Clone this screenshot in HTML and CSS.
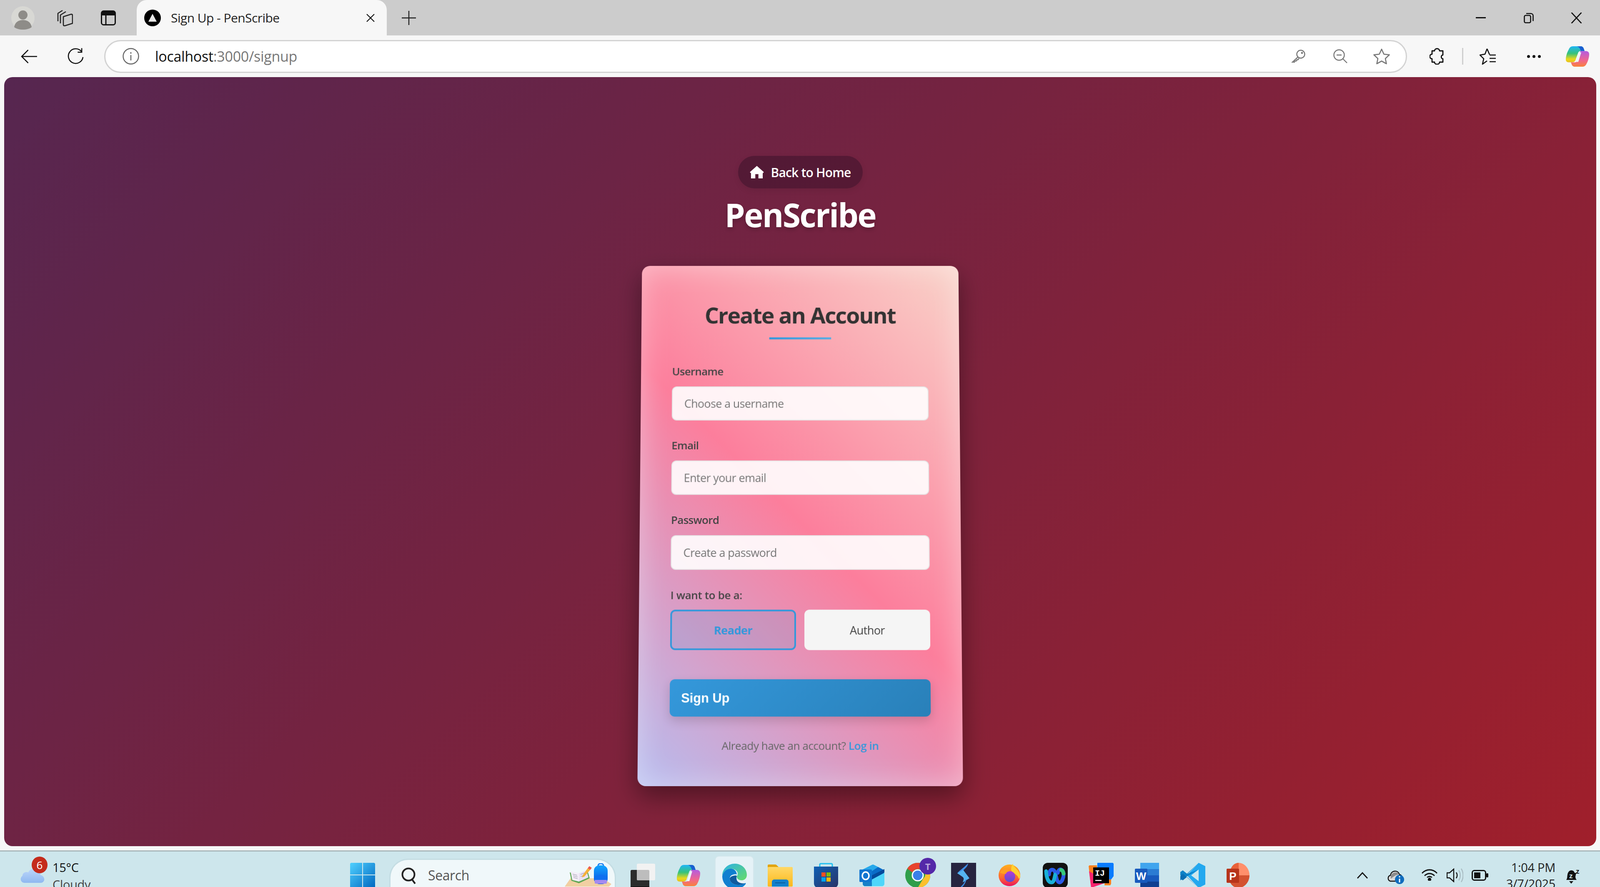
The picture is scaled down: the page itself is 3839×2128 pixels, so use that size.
FILE: index.html

```html
<!DOCTYPE html>
<html lang="en">
<head>
    <meta charset="UTF-8">
    <title>Sign Up - PenScribe</title>
    <link rel="stylesheet" href="styles.css">
</head>
<body>
    <svg width="0" height="0" class="defs">
        <defs>
            <linearGradient id="copilotA" x1="0" y1="0" x2="0" y2="1">
                <stop offset="0" stop-color="#1fb6f6"/><stop offset=".45" stop-color="#37c27a"/><stop offset=".8" stop-color="#e8d81c"/><stop offset="1" stop-color="#e8c020"/>
            </linearGradient>
            <linearGradient id="copilotB" x1="0" y1="0" x2="0" y2="1">
                <stop offset="0" stop-color="#b45ce0"/><stop offset=".6" stop-color="#f0668e"/><stop offset="1" stop-color="#f9823a"/>
            </linearGradient>
            <linearGradient id="winBlue" x1="0" y1="0" x2="1" y2="1">
                <stop offset="0" stop-color="#4fd0ff"/><stop offset="1" stop-color="#0067c0"/>
            </linearGradient>
            <linearGradient id="edgeA" x1="0" y1="0" x2="1" y2="1">
                <stop offset="0" stop-color="#2bb0e8"/><stop offset="1" stop-color="#66dc68"/>
            </linearGradient>
            <linearGradient id="folderA" x1="0" y1="0" x2="0" y2="1">
                <stop offset="0" stop-color="#ffd866"/><stop offset="1" stop-color="#fcb81c"/>
            </linearGradient>
            <linearGradient id="storeA" x1="0" y1="0" x2="1" y2="1">
                <stop offset="0" stop-color="#0f5fb4"/><stop offset="1" stop-color="#2a3466"/>
            </linearGradient>
            <linearGradient id="foxA" x1="0" y1="0" x2="0" y2="1">
                <stop offset="0" stop-color="#ffb020"/><stop offset=".6" stop-color="#ff6a2e"/><stop offset="1" stop-color="#e8135f"/>
            </linearGradient>
            <linearGradient id="foxB" x1="0" y1="0" x2="0" y2="1">
                <stop offset="0" stop-color="#b63ad8"/><stop offset="1" stop-color="#5a4fd0"/>
            </linearGradient>
            <linearGradient id="packA" x1="0" y1="0" x2="0" y2="1">
                <stop offset="0" stop-color="#12a4ff"/><stop offset="1" stop-color="#0a4fe0"/>
            </linearGradient>
            <linearGradient id="cloudA" x1="0" y1="0" x2="0" y2="1">
                <stop offset="0" stop-color="#bcd6fa"/><stop offset="1" stop-color="#8fb8f0"/>
            </linearGradient>
            <symbol id="copilot" viewBox="2 4 56 52" preserveAspectRatio="none">
                <path d="M19 5h18c4 0 7 2 8 6l2 6h-9c-4 0-6 2-7 6l-5 14c-1 5-4 8-9 8H9c-5 0-7-3-7-7 0-8 3-18 7-25 2-5 5-8 10-8z" fill="url(#copilotA)"/>
                <path d="M28 5h9c4 0 7 2 8 6l2 6h-9c-1-5-4-11-10-12z" fill="#1a5fd0"/>
                <path d="M38 17h12c5 0 8 3 8 8 0 8-3 18-7 25-2 4-5 6-10 6H24c-4 0-7-2-8-6l-2-5h9c4 0 6-2 7-6l5-14c1-5 1-8 3-8z" fill="url(#copilotB)"/>
                <path d="M34 20h5l-7 24h-6z" fill="#eef6f8"/>
            </symbol>
        </defs>
    </svg>

    <header class="tabbar">
        <svg class="avatar" viewBox="0 0 56 56">
            <circle cx="28" cy="28" r="28" fill="#d8d8d4"/>
            <circle cx="28" cy="21" r="11" fill="#8e8c88"/>
            <path d="M7 50c2-12 11-17 21-17s19 5 21 17c-5 4-13 6-21 6s-16-2-21-6z" fill="#8e8c88"/>
        </svg>
        <svg class="tab-icon collections" viewBox="0 0 40 40" fill="none" stroke="#222" stroke-width="2.6" stroke-linejoin="round">
            <path d="M4 28V9l11-7M10 33V13l13-8"/>
            <path d="M17 17l19-6c2 0 3 1 3 3v19l-19 6c-2 0-3-1-3-3z"/>
        </svg>
        <svg class="tab-icon vertical" viewBox="0 0 36 36">
            <rect x="1.500" y="1.500" width="33" height="33" rx="5" fill="none" stroke="#111" stroke-width="3"/>
            <path d="M1.500 7a5 5 0 0 1 5-5.500h23a5 5 0 0 1 5 5.500v5h-33z" fill="#111"/>
            <path d="M12 12v22" stroke="#111" stroke-width="3"/>
        </svg>
        <div class="tab">
            <svg class="favicon" viewBox="0 0 40 40">
                <circle cx="20" cy="20" r="20" fill="#000"/>
                <path d="M20 10l10 19H10z" fill="#e8e8e8"/>
            </svg>
            <span class="tab-title">Sign Up - PenScribe</span>
            <svg class="tab-close" viewBox="0 0 20 20" stroke="#111" stroke-width="2.200"><path d="M1 1l18 18M19 1L1 19"/></svg>
        </div>
        <svg class="new-tab" viewBox="0 0 34 34" stroke="#222" stroke-width="2.400"><path d="M17 0v34M0 17h34"/></svg>
        <div class="window-controls">
            <svg class="win-min" viewBox="0 0 24 4"><rect width="24" height="3" fill="#111"/></svg>
            <svg class="win-restore" viewBox="0 0 24 26" fill="none" stroke="#111" stroke-width="2.600">
                <rect x="1.500" y="7" width="15" height="17.500" rx="3"/>
                <path d="M6 2.500h11c3 0 5.500 2 5.500 5v13"/>
            </svg>
            <svg class="win-close" viewBox="0 0 26 26" stroke="#111" stroke-width="2.600"><path d="M1 0l24 26M25 0L1 26"/></svg>
        </div>
    </header>

    <nav class="toolbar">
        <svg class="back" viewBox="0 0 40 34" fill="none" stroke="#111" stroke-width="2.600"><path d="M40 17H2M18 1L2 17l16 16"/></svg>
        <svg class="reload" viewBox="0 0 42 40" fill="none" stroke="#111" stroke-width="2.600"><path d="M36 8a18 18 0 1 0 4 14M37 0v10H27"/></svg>
        <div class="address">
            <svg class="info" viewBox="0 0 40 40" fill="none" stroke="#666" stroke-width="2.400">
                <circle cx="20" cy="20" r="18.500"/>
                <path d="M20 17v13M20 10v4"/>
            </svg>
            <span class="url">localhost<span class="url-rest">:3000/signup</span></span>
            <svg class="key" viewBox="0 0 34 32" fill="none" stroke="#777" stroke-width="2.400">
                <circle cx="23" cy="11" r="9.500"/>
                <path d="M16 18L3 30h5l2-3h3l1-3h3l2-4"/>
                <circle cx="26" cy="8" r="1.200" fill="#777"/>
            </svg>
            <svg class="zoom-out" viewBox="0 0 34 34" fill="none" stroke="#777" stroke-width="2.400">
                <circle cx="14" cy="14" r="12.500"/>
                <path d="M8 14h12M23 23l10 10"/>
            </svg>
            <svg class="star" viewBox="0 0 40 38" fill="none" stroke="#777" stroke-width="2.600" stroke-linejoin="round">
                <path d="M20 2l5.500 12 13 1.500-9.500 9 2.500 12.500L20 30.500 8.500 37 11 24.500l-9.500-9 13-1.500z"/>
            </svg>
        </div>
        <svg class="puzzle" viewBox="0 0 36 40" fill="none" stroke="#111" stroke-width="2.800" stroke-linejoin="round">
            <path d="M12 7c0-7 12-7 12 0h8v10c-5 0-5 9 0 9v8h-8c0 7-12 7-12 0H6v-8C-1 26-1 15 6 15V7z"/>
        </svg>
        <span class="tool-divider"></span>
        <svg class="fav-list" viewBox="0 0 40 40" fill="none" stroke="#111" stroke-width="2.600" stroke-linejoin="round">
            <path d="M18 2l-5 13L1 17l9 9-3 13 11-8"/>
            <path d="M18 2l6 14M24 17h15M24 25h15M24 33h15"/>
        </svg>
        <div class="dots"><i></i><i></i><i></i></div>
        <svg class="copilot-big"><use href="#copilot"/></svg>
    </nav>

    <main class="page">
        <a class="home-link" href="#">
            <svg class="home-icon" viewBox="0 0 36 32"><path d="M18 0l18 16-3 3v13H22V21h-8v11H3V19l-3-3z" fill="#fff"/></svg>
            Back to Home
        </a>
        <h1 class="brand">PenScribe</h1>

        <section class="card">
            <h2 class="card-title">Create an Account</h2>
            <div class="title-rule"></div>

            <div class="field">
                <label class="field-label">Username</label>
                <input class="field-input" type="text" placeholder="Choose a username">
            </div>
            <div class="field">
                <label class="field-label">Email</label>
                <input class="field-input" type="email" placeholder="Enter your email">
            </div>
            <div class="field">
                <label class="field-label">Password</label>
                <input class="field-input" type="password" placeholder="Create a password">
            </div>

            <div class="field-label role-label">I want to be a:</div>
            <div class="roles">
                <button class="role role-active">Reader</button>
                <button class="role">Author</button>
            </div>

            <button class="submit">Sign Up</button>
            <p class="card-foot">Already have an account? <a href="#">Log in</a></p>
        </section>
    </main>
    <div class="page-strip"></div>

    <footer class="taskbar">
        <div class="weather">
            <div class="weather-icon">
                <svg class="cloud" viewBox="0 0 60 38"><path d="M11 38C2 38-2 27 6 21c0-7 8-11 14-8C24 2 42 0 48 12c1 3 1 5 1 7 12 3 13 19-1 19z" fill="url(#cloudA)"/></svg>
                <span class="weather-badge">6</span>
            </div>
            <div class="weather-text">
                <span class="weather-temp">15°C</span>
                <span class="weather-state">Cloudy</span>
            </div>
        </div>

        <div class="app">
            <svg class="app-icon" viewBox="0 0 58 58">
                <path d="M2 0h26v27H0V2zM30 0h26l2 2v25H30zM0 29h28v29H2l-2-2zM30 29h28v27l-2 2H30z" fill="url(#winBlue)"/>
            </svg>
        </div>
        <div class="search">
            <svg class="search-icon" viewBox="0 0 36 40" fill="none" stroke="#222" stroke-width="4"><circle cx="17" cy="17" r="14.500"/><path d="M25 28l8 11"/></svg>
            <span class="search-text">Search</span>
            <svg class="search-art" viewBox="0 0 112 56">
                <path d="M0 56l14-20h78l20 14-6 6z" fill="#f1cfa2"/>
                <path d="M12 22l20 4 23-7 5 17-26 12-18-6z" fill="#5fa854"/>
                <path d="M14 19l20 5 0 20-16-4z" fill="#f3eef8"/>
                <path d="M34 24l18-7 5 17-23 10z" fill="#e9e0f2"/>
                <path d="M19 26l11 3M20 30l11 3M21 34l10 3M38 27l10-4M38 32l11-4" stroke="#9a96a8" stroke-width="1.200"/>
                <path d="M43 29l12-17 6 4-14 16-6 2z" fill="#f5b03a"/>
                <path d="M55 12l4-5 6 4-4 5z" fill="#ee5a4a"/>
                <path d="M80 6c0-7 13-7 13 0" fill="none" stroke="#1a7cf0" stroke-width="3"/>
                <rect x="70" y="5" width="33" height="45" rx="13" fill="url(#packA)"/>
                <path d="M72 48V38c0-14 29-14 29 0v10z" fill="#0f6ff0"/>
                <path d="M72 40h29v6c0 2-1 3-3 3H75c-2 0-3-1-3-3z" fill="#a48af0"/>
            </svg>
        </div>

        <div class="app">
            <svg class="app-icon" viewBox="0 0 60 60">
                <rect x="1" y="17" width="45" height="43" rx="3" fill="#2c2c2c"/>
                <rect x="1" y="57" width="45" height="3" fill="#000"/>
                <rect x="16" y="2" width="44" height="40" rx="3" fill="#f2f2f2"/>
                <path d="M16 17h27a3 3 0 0 1 3 3v22H19a3 3 0 0 1-3-3z" fill="#bdbdbd"/>
            </svg>
        </div>
        <div class="app">
            <svg class="app-icon" viewBox="0 0 60 60"><use href="#copilot" x="2" y="4" width="56" height="52"/></svg>
        </div>
        <div class="app app-running">
            <svg class="app-icon" viewBox="0 0 60 60">
                <path d="M1 29C1 12 15 0 31 0c16 0 29 12 29 27 0 8-6 13-12 13-6 0-11-3-12-7-1-3 2-4 2-9 0-7-8-12-16-12C12 12 4 20 1 29z" fill="url(#edgeA)"/>
                <path d="M1 30c0 17 13 31 30 31 10 0 20-4 26-12 1-2 0-3-2-2-5 3-10 4-16 4-12 0-20-7-20-15 0-6 4-9 9-10 3-1 6-1 8 0C35 17 29 12 22 12 11 12 3 20 1 30z" fill="#0f7fd0"/>
                <path d="M19 36c0 8 8 15 20 15 6 0 11-1 16-4-5 1-20 0-20-12 0-4 1-5 1-6-2-1-5-1-8 0-5 1-9 4-9 7z" fill="#0f5a9e"/>
            </svg>
        </div>
        <div class="app">
            <svg class="app-icon" viewBox="0 0 60 60">
                <path d="M0 6c0-1 1-2 2-2h16c2 0 3 1 5 3l4 4H0z" fill="#e2a40a"/>
                <rect y="10" width="60" height="47" rx="2" fill="url(#folderA)"/>
                <path d="M10 57V46c0-4 3-6 6-6h28c3 0 6 2 6 6v11z" fill="#1080cc"/>
                <rect x="18" y="47" width="24" height="2" fill="#0b5c9a"/>
            </svg>
        </div>
        <div class="app">
            <svg class="app-icon" viewBox="0 0 60 60">
                <path d="M15 10V4c0-1 1-2 2-2h26c1 0 2 1 2 2v6" fill="none" stroke="#21c0f0" stroke-width="3"/>
                <path d="M1 9h58v40c0 7-5 11-11 11H12C6 60 1 56 1 49z" fill="url(#storeA)"/>
                <rect x="19" y="23" width="10" height="10" fill="#f25022"/>
                <rect x="31" y="23" width="10" height="10" fill="#7fba00"/>
                <rect x="19" y="35" width="10" height="10" fill="#00a4ef"/>
                <rect x="31" y="35" width="10" height="10" fill="#ffb900"/>
            </svg>
        </div>
        <div class="app">
            <svg class="app-icon" viewBox="0 0 60 60">
                <path d="M8 16L30 5c2-1 3-1 5 0l23 12c1 1 2 2 2 4v29c0 4-3 6-6 6H14c-3 0-6-2-6-6z" fill="#4fd6fa"/>
                <path d="M8 16L30 5c2-1 3-1 5 0l10 5-15 18H8z" fill="#28a8ea"/>
                <path d="M30 20l15-10 13 7c1 1 2 2 2 4L30 38z" fill="#0a6cc8"/>
                <path d="M30 30l30-15v6c0 2-1 3-2 4L30 40z" fill="#044a9c"/>
                <path d="M8 46h22v10H14c-3 0-6-2-6-6z" fill="#1680c8"/>
                <rect y="16" width="30" height="30" rx="2" fill="#0f74d0"/>
                <ellipse cx="15" cy="31" rx="8" ry="9" fill="none" stroke="#fff" stroke-width="3.500"/>
            </svg>
        </div>
        <div class="app">
            <svg class="app-icon" viewBox="0 0 60 60">
                <circle cx="30" cy="30" r="30" fill="#2f9e4a"/>
                <path d="M30 0a30 30 0 0 1 26 15H30a15 15 0 0 0-13 8L5 14A30 30 0 0 1 30 0z" fill="#e8432e"/>
                <path d="M56 15a30 30 0 0 1-26 45l13-22a15 15 0 0 0 0-23z" fill="#fbc02d"/>
                <circle cx="30" cy="30" r="13" fill="#3a7fe8" stroke="#fff" stroke-width="3"/>
            </svg>
            <span class="chrome-badge">T</span>
        </div>
        <div class="app">
            <svg class="app-icon" viewBox="0 0 60 60">
                <rect width="60" height="60" fill="#272440"/>
                <path d="M41 1C40 10 33 13 29 19L24 30l-9-5C20 18 33 10 41 1z" fill="#3f8fe8"/>
                <path d="M15 25l14-8 15 20-16 10c2-7 4-9 0-13z" fill="#55b4f0"/>
                <path d="M34 41c-2 9-7 12-13 19h4c6-6 10-12 12-21z" fill="#3f8fe8"/>
            </svg>
        </div>
        <div class="app">
            <svg class="app-icon" viewBox="0 0 60 60">
                <circle cx="30" cy="30" r="26" fill="url(#foxA)"/>
                <path d="M38 2c2 10 14 12 18 28 0 6-2 8-4 8C52 28 34 24 34 16c0-6 2-10 4-14z" fill="#ffd030"/>
                <circle cx="31" cy="33" r="13" fill="url(#foxB)"/>
                <path d="M7 23c5-8 20-10 24-3-4 0-9 3-9 6-5 1-11 0-15-3z" fill="#ffa020"/>
            </svg>
        </div>
        <div class="app">
            <svg class="app-icon" viewBox="0 0 60 60" fill="none" stroke-width="9" stroke-linecap="round">
                <rect width="60" height="60" rx="12" fill="#111"/>
                <path d="M15 28C15 15 27 12 30 24c3 14 5 23 10 23 6 0 10-11 10-19" stroke="#2a5be8"/>
                <path d="M8 20c1 18 6 27 13 27 6 0 7-11 9-19" stroke="#18b0d8"/>
                <path d="M36 24c2-12 12-10 14 2" stroke="#2a5be8"/>
                <path d="M44 17c3 1 5 4 6 9" stroke="#36c87a"/>
            </svg>
        </div>
        <div class="app">
            <svg class="app-icon" viewBox="0 0 60 60">
                <path d="M2 6h18l2 44H5L0 8z" fill="#f9801e"/>
                <path d="M40 30h14v20l-2 4H38z" fill="#f9801e"/>
                <path d="M21 0h37l2 2v30l-6 8H20z" fill="#0a7cff"/>
                <path d="M1 20L46 46 6 60z" fill="#f7246e"/>
                <rect x="11" y="11" width="38" height="38" fill="#000"/>
                <text class="ij-text" x="15" y="31">IJ</text>
                <rect x="16" y="41" width="15" height="2.500" fill="#fff"/>
            </svg>
        </div>
        <div class="app">
            <svg class="app-icon" viewBox="0 0 60 60">
                <rect x="14" width="45" height="15" fill="#41a5ee"/>
                <rect x="14" y="15" width="45" height="15" fill="#2b7cd3"/>
                <rect x="14" y="30" width="45" height="15" fill="#185abd"/>
                <rect x="14" y="45" width="45" height="15" fill="#103f91"/>
                <rect x="1" y="14" width="30" height="34" rx="2" fill="#185abd"/>
                <text class="word-text" x="16" y="41">W</text>
            </svg>
        </div>
        <div class="app">
            <svg class="app-icon" viewBox="0 0 60 60">
                <path d="M44 0l16 8v44l-16 8L16 30z" fill="#23a8ef"/>
                <path d="M44 0L8 36 0 30v-8l6-4 10 8L44 0z" fill="#0d82c8"/>
                <path d="M44 16L0 42v-4l8-8z" fill="#0d82c8"/>
                <path d="M44 60L6 26l-6 6 0 6 6 4 10-8z" fill="#0a6eb4"/>
                <path d="M44 16v28L26 30z" fill="#cde6ec"/>
            </svg>
        </div>
        <div class="app">
            <svg class="app-icon" viewBox="0 0 60 60">
                <path d="M30 30h26c0 16-12 30-26 30-12 0-20-8-23-20V22z" fill="#d35230"/>
                <path d="M9 22C11 8 20 0 30 0v30z" fill="#e8623a"/>
                <path d="M30 0c14 0 26 14 26 30H30z" fill="#ff8f6b"/>
                <rect x="1" y="14" width="30" height="34" rx="2" fill="#b7341a"/>
                <text class="word-text" x="16" y="41">P</text>
            </svg>
        </div>

        <div class="tray">
            <svg class="tray-chevron" viewBox="0 0 26 16" fill="none" stroke="#111" stroke-width="2.600"><path d="M1 15L13 2l12 13"/></svg>
            <svg class="tray-cloud" viewBox="0 0 42 36">
                <path d="M7 28C0 26 0 16 7 14 9 2 25 0 29 12c4 1 6 4 6 8l-6 8z" fill="#d8d8d8" stroke="#111" stroke-width="2.400"/>
                <path d="M8 14c4-8 18-10 20-2-8 0-14 6-20 10z" fill="#8c8c8c"/>
                <circle cx="29" cy="24" r="11" fill="#0f6cbd"/>
                <path d="M29 22v9M29 16v3" stroke="#fff" stroke-width="3"/>
            </svg>
            <svg class="tray-wifi" viewBox="0 0 38 28" fill="none" stroke="#111" stroke-width="2.800">
                <path d="M1 10c10-11 26-11 36 0M7 16c7-7 17-7 24 0M13 20c4-3 8-3 12 0"/>
                <circle cx="19" cy="25" r="2.800" fill="#111"/>
            </svg>
            <svg class="tray-volume" viewBox="0 0 40 34" fill="none" stroke="#111" stroke-width="2.400">
                <path d="M1 11h6l10-9v30L7 23H1z"/>
                <path d="M23 10c3 4 3 10 0 14"/>
                <path d="M29 5c5 7 5 17 0 24M35 1c6 9 6 23 0 32" stroke="#a9bcc2"/>
            </svg>
            <svg class="tray-battery" viewBox="0 0 40 26">
                <rect x="1.500" y="1.500" width="32" height="23" rx="5" fill="none" stroke="#111" stroke-width="3"/>
                <rect x="6" y="6" width="15" height="14" fill="#111"/>
                <rect x="35" y="8" width="5" height="10" rx="2" fill="#111"/>
            </svg>
            <div class="clock">
                <span>1:04 PM</span>
                <span>3/7/2025</span>
            </div>
            <svg class="tray-bell" viewBox="0 0 36 38">
                <path d="M3 28c3-4 2-8 3-13C7 9 11 5 15 5c4 0 7 2 8 6h4l-2 9c0 3 1 6 3 8z" fill="#111"/>
                <path d="M10 31h10l-5 6z" fill="#111"/>
                <text class="bell-in" x="10" y="24">z</text>
                <text class="bell-out" x="26" y="13">z</text>
            </svg>
        </div>
    </footer>
</body>
</html>
```

FILE: styles.css

```css
* {
    box-sizing: border-box;
}
html, body {
    height: 100%;
}
body {
    margin: 0;
    display: flex;
    flex-direction: column;
    height: 2128px;
    overflow: hidden;
    background-color: #f7f7f7;
    font-family: "Open Sans", "Noto Sans", sans-serif;
    color: #111;
}
svg {
    display: block;
    flex: none;
}
.defs {
    position: absolute;
}

/* browser tab strip */
.tabbar {
    flex: none;
    height: 85px;
    display: flex;
    align-items: center;
    padding-left: 27px;
    background-color: #cccccc;
}
.avatar {
    width: 56px;
    height: 56px;
}
.tab-icon.collections {
    width: 40px;
    height: 40px;
    margin-left: 52px;
}
.tab-icon.vertical {
    width: 36px;
    height: 36px;
    margin-left: 67px;
}
.tab {
    align-self: stretch;
    width: 600px;
    margin-left: 50px;
    padding: 0 29px 0 18px;
    display: flex;
    align-items: center;
    background-color: #f7f7f7;
    border-radius: 24px 24px 0 0;
}
.favicon {
    width: 40px;
    height: 40px;
}
.tab-title {
    margin-left: 24px;
    font-size: 30px;
    letter-spacing: -0.550px;
    color: #222;
    flex: 1;
}
.tab-close {
    width: 20px;
    height: 20px;
}
.new-tab {
    width: 34px;
    height: 34px;
    margin-left: 36px;
}
.window-controls {
    margin-left: auto;
    display: flex;
    align-items: center;
}
.win-min {
    width: 24px;
    height: 4px;
}
.win-restore {
    width: 24px;
    height: 26px;
    margin-left: 91px;
}
.win-close {
    width: 27px;
    height: 26px;
    margin-left: 89px;
    margin-right: 43px;
}

/* address bar row */
.toolbar {
    flex: none;
    height: 100px;
    display: flex;
    align-items: center;
    padding-left: 50px;
    background-color: #f7f7f7;
}
.back {
    width: 39px;
    height: 33px;
}
.reload {
    width: 41px;
    height: 40px;
    margin-left: 71px;
}
.address {
    width: 3126px;
    height: 79px;
    margin-left: 49px;
    padding: 0 38px 0 41px;
    display: flex;
    align-items: center;
    background-color: #fff;
    border: 3px solid #d3d3d3;
    border-radius: 40px;
}
.info {
    width: 40px;
    height: 40px;
}
.url {
    margin-left: 38px;
    font-size: 34px;
    letter-spacing: -0.300px;
    color: #111;
    flex: 1;
}
.url-rest {
    color: #777;
}
.key {
    width: 34px;
    height: 32px;
}
.zoom-out {
    width: 34px;
    height: 34px;
    margin-left: 67px;
}
.star {
    width: 40px;
    height: 38px;
    margin-left: 62px;
}
.puzzle {
    width: 36px;
    height: 40px;
    margin-left: 54px;
}
.tool-divider {
    width: 3px;
    height: 40px;
    margin-left: 42px;
    background-color: #cfcfcf;
}
.fav-list {
    width: 40px;
    height: 40px;
    margin-left: 39px;
}
.dots {
    width: 33px;
    margin-left: 74px;
    display: flex;
    justify-content: space-between;
}
.dots i {
    width: 7px;
    height: 7px;
    border-radius: 50%;
    background-color: #111;
}
.copilot-big {
    width: 56px;
    height: 50px;
    margin-left: 60px;
}

/* the rendered page */
.page {
    flex: none;
    height: 1845px;
    margin: 0 9px 0 10px;
    padding-top: 189px;
    display: flex;
    flex-direction: column;
    align-items: center;
    background: linear-gradient(135deg, #562650 0%, #a01f2b 100%);
    border-radius: 20px;
}
.home-link {
    height: 78px;
    width: 299px;
    display: flex;
    align-items: center;
    justify-content: center;
    gap: 15px;
    font-size: 30px;
    font-weight: 600;
    letter-spacing: -0.8px;
    color: #fff;
    text-decoration: none;
    background-color: rgba(30, 10, 30, 0.35);
    border-radius: 39px;
    box-shadow: 0 5px 15px rgba(0, 0, 0, 0.08);
}
.home-icon {
    width: 36px;
    height: 30px;
}
.brand {
    margin: 10px 0 0;
    font-size: 78px;
    line-height: 106px;
    font-weight: 700;
    letter-spacing: -2.400px;
    color: #fff;
    text-shadow: 0 5px 10px rgba(0, 0, 0, 0.2);
}
.card {
    width: 770px;
    height: 1250px;
    margin-top: 60px;
    padding: 91px 75px 0;
    background: linear-gradient(45deg, #b6bdf0 0%, #fc7e9c 50%, #f9d3c9 100%);
    border-radius: 20px;
    box-shadow: 0 25px 60px rgba(0, 0, 0, 0.4), inset 0 0 70px rgba(255, 255, 255, 0.4);
    transform: perspective(2500px) rotateX(3.3deg);
}
.card-title {
    margin: 0;
    font-size: 54px;
    line-height: 60px;
    font-weight: 700;
    letter-spacing: -1.900px;
    text-align: center;
    color: #333;
}
.title-rule {
    width: 150px;
    height: 5px;
    margin: 25px auto 0;
    background: linear-gradient(90deg, #3498db, #5dade2);
}
.field {
    margin-top: 60px;
}
.field + .field {
    margin-top: 42px;
}
.field-label {
    display: block;
    margin-bottom: 19px;
    font-size: 26px;
    line-height: 36px;
    font-weight: 600;
    letter-spacing: -0.7px;
    color: #444;
}
.field-input {
    display: block;
    width: 100%;
    height: 83px;
    padding: 0 28px;
    font-family: inherit;
    font-size: 27px;
    letter-spacing: -0.600px;
    color: #333;
    background-color: rgba(255, 255, 255, 0.9);
    border: 2px solid rgba(224, 224, 224, 0.8);
    border-radius: 12px;
    outline: none;
}
.field-input::placeholder {
    color: #757575;
    opacity: 1;
}
.role-label {
    margin-top: 42px;
    margin-bottom: 17px;
    letter-spacing: -0.400px;
}
.roles {
    display: grid;
    grid-template-columns: 1fr 1fr;
    gap: 20px;
}
.role {
    height: 96px;
    font-family: inherit;
    font-size: 27px;
    font-weight: 500;
    letter-spacing: -0.600px;
    color: #444;
    background-color: #f5f5f5;
    border: 0;
    border-radius: 12px;
}
.role-active {
    font-weight: 700;
    color: #3498db;
    background-color: rgba(52, 152, 219, 0.15);
    border: 4px solid #3498db;
}
.submit {
    display: block;
    width: 100%;
    height: 88px;
    margin-top: 69px;
    padding: 0 27px;
    font-family: "Liberation Sans", Arial, sans-serif;
    font-size: 30.500px;
    font-weight: 700;
    text-align: left;
    color: #fff;
    background: linear-gradient(135deg, #3498db, #2980b9);
    border: 0;
    border-radius: 12px;
    box-shadow: 0 10px 25px rgba(0, 0, 0, 0.15);
}
.card-foot {
    margin: 50px 0 0;
    font-size: 26px;
    line-height: 36px;
    letter-spacing: -0.550px;
    text-align: center;
    color: #666;
}
.card-foot a {
    font-weight: 600;
    color: #3498db;
    text-decoration: none;
}
.page-strip {
    flex: none;
    height: 10px;
}

/* windows taskbar */
.taskbar {
    flex: none;
    height: 88px;
    display: flex;
    align-items: flex-start;
    overflow: hidden;
    background-color: #cde6ec;
    border-top: 3px solid #aab8bc;
}
.weather {
    width: 815px;
    flex: none;
    padding: 12px 0 0 48px;
    display: flex;
}
.weather-icon {
    position: relative;
    width: 78px;
    height: 74px;
}
.cloud {
    position: absolute;
    left: 0;
    top: 25px;
    width: 60px;
    height: 38px;
}
.weather-badge {
    position: absolute;
    left: 28px;
    top: 0;
    width: 38px;
    height: 40px;
    font-size: 26px;
    line-height: 40px;
    text-align: center;
    color: #fff;
    background-color: #c42b1c;
    border-radius: 50%;
}
.weather-text {
    margin-top: 5px;
    display: flex;
    flex-direction: column;
    font-size: 29px;
    line-height: 41px;
    letter-spacing: -0.300px;
}
.weather-state {
    color: #444;
}
.app {
    width: 110px;
    height: 85px;
    flex: none;
    padding-top: 27px;
    display: flex;
    justify-content: center;
    position: relative;
}
.app-icon {
    width: 60px;
    height: 60px;
}
.app-running {
    width: 94px;
    height: 85px;
    margin: 10px 8px 0;
    padding-top: 17px;
    background-color: #e5f2f7;
    border: 2px solid #d3e7ec;
    border-bottom: 0;
    border-radius: 10px 10px 0 0;
}
.chrome-badge {
    position: absolute;
    left: 59px;
    top: 15px;
    width: 40px;
    height: 40px;
    font-size: 22px;
    font-weight: 700;
    line-height: 40px;
    text-align: center;
    color: #b9a6dc;
    background-color: #5428a8;
    border-radius: 50%;
}
.ij-text {
    font-family: "Liberation Mono", monospace;
    font-size: 20px;
    font-weight: 700;
    fill: #fff;
}
.word-text {
    font-family: "Liberation Sans", sans-serif;
    font-size: 26px;
    font-weight: 700;
    fill: #fff;
    text-anchor: middle;
}
.search {
    width: 544px;
    height: 90px;
    flex: none;
    margin: 17px 9px 0 9px;
    padding: 0 8px 0 26px;
    display: flex;
    align-items: flex-start;
    background-color: #f0f8fa;
    border: 3px solid #c4dde3;
    border-bottom: 0;
    border-radius: 45px 45px 0 0;
}
.search-icon {
    width: 36px;
    height: 40px;
    margin-top: 18px;
}
.search-text {
    margin-top: 15px;
    margin-left: 28px;
    font-size: 32px;
    line-height: 44px;
    letter-spacing: -0.4px;
    color: #555;
}
.search-art {
    width: 112px;
    height: 56px;
    margin: 8px 0 0 auto;
}
.tray {
    margin-left: auto;
    padding-top: 12px;
    display: flex;
    align-items: flex-start;
}
.tray-chevron {
    width: 26px;
    height: 16px;
    margin-top: 37px;
}
.tray-cloud {
    width: 42px;
    height: 36px;
    margin: 31px 0 0 47px;
}
.tray-wifi {
    width: 38px;
    height: 28px;
    margin: 30px 0 0 40px;
}
.tray-volume {
    width: 40px;
    height: 34px;
    margin: 28px 0 0 22px;
}
.tray-battery {
    width: 40px;
    height: 26px;
    margin: 32px 0 0 20px;
}
.clock {
    width: 125px;
    margin-left: 36px;
    margin-top: 6px;
    display: flex;
    flex-direction: column;
    align-items: flex-end;
    font-size: 29px;
    line-height: 39px;
    letter-spacing: -0.300px;
    color: #222;
    white-space: nowrap;
}
.tray-bell {
    width: 36px;
    height: 38px;
    margin: 28px 48px 0 23px;
}
.bell-in, .bell-out {
    font-family: "Liberation Sans", sans-serif;
    font-size: 17px;
    font-weight: 700;
}
.bell-in {
    fill: #cde6ec;
}
.bell-out {
    fill: #111;
}
```
